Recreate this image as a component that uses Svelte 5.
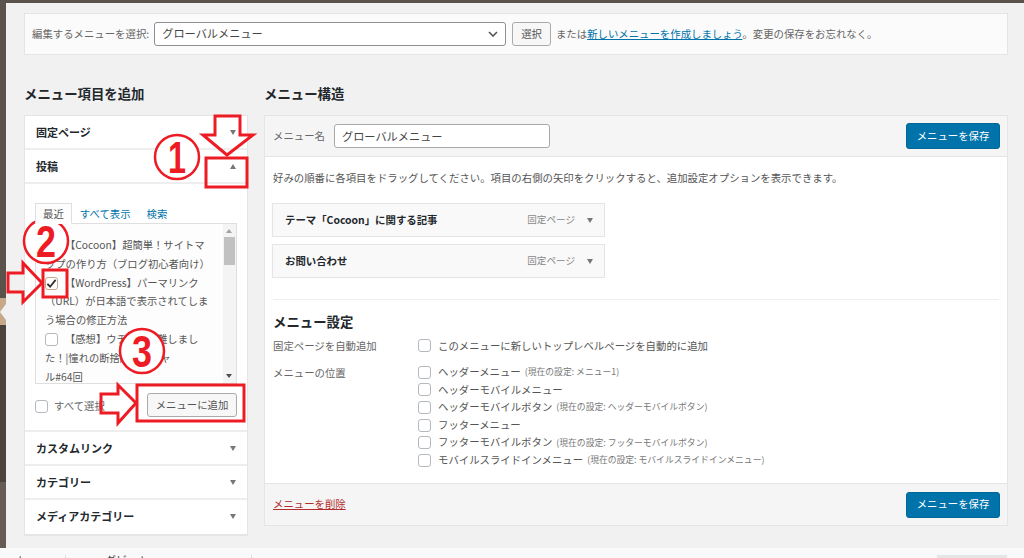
<script>
	const items = ['テーマ「Cocoon」に関する記事', 'お問い合わせ'];
	const posts = [
		{ lines: ['【Cocoon】超簡単！サイトマ', 'ップの作り方（ブログ初心者向け）'], checked: false },
		{ lines: ['【WordPress】パーマリンク', '（URL）が日本語で表示されてしま', 'う場合の修正方法'], checked: true },
		{ lines: ['【感想】ウチ、卒業難しまし', 'た！|憧れの断捨離スペシャ', 'ル#64回'], checked: false }
	];
	const locations = [
		['ヘッダーメニュー', '(現在の設定: メニュー1)'],
		['ヘッダーモバイルメニュー', ''],
		['ヘッダーモバイルボタン', '(現在の設定: ヘッダーモバイルボタン)'],
		['フッターメニュー', ''],
		['フッターモバイルボタン', '(現在の設定: フッターモバイルボタン)'],
		['モバイルスライドインメニュー', '(現在の設定: モバイルスライドインメニュー)']
	];
</script>

<div class="page">
	<div class="strip"></div>
	<div class="wrap">
		<div class="manage">
			<span class="muted">編集するメニューを選択:</span>
			<div class="select">グローバルメニュー
				<svg width="10" height="6" viewBox="0 0 10 6"><path d="M1 1l4 4 4-4" fill="none" stroke="#555" stroke-width="1.6"/></svg>
			</div>
			<button class="btn">選択</button>
			<span class="muted">または<a href="#new">新しいメニューを作成しましょう</a>。変更の保存をお忘れなく。</span>
		</div>

		<div class="columns">
			<div class="left">
				<h2>メニュー項目を追加</h2>
				<div class="acc">
					<div class="acc-row">固定ページ<i class="down"></i></div>
					<div class="acc-row">投稿<i class="up"></i></div>
					<div class="acc-body">
						<div class="tabs">
							<span class="tab active">最近</span>
							<span class="tab">すべて表示</span>
							<span class="tab">検索</span>
						</div>
						<div class="list">
							<div class="scrollbar"><i class="sb-up"></i><b></b><i class="sb-down"></i></div>
							{#each posts as post}
								<div class="post">
									<span class="cb" class:on={post.checked}>
										{#if post.checked}
											<svg width="11" height="11" viewBox="0 0 12 12"><path d="M1.5 6.5l3 3 6-7.5" fill="none" stroke="#333" stroke-width="2"/></svg>
										{/if}
									</span>
									{#each post.lines as line}
										<span class="post-line">{line}</span>
									{/each}
								</div>
							{/each}
						</div>
						<div class="list-foot">
							<span class="cb"></span>
							<span class="muted">すべて選択</span>
							<button class="btn add">メニューに追加</button>
						</div>
					</div>
					<div class="acc-row">カスタムリンク<i class="down"></i></div>
					<div class="acc-row">カテゴリー<i class="down"></i></div>
					<div class="acc-row">メディアカテゴリー<i class="down"></i></div>
				</div>
			</div>

			<div class="right">
				<h2>メニュー構造</h2>
				<div class="panel">
					<div class="panel-head">
						<span class="muted">メニュー名</span>
						<div class="name">グローバルメニュー</div>
						<button class="btn primary">メニューを保存</button>
					</div>
					<div class="panel-body">
						<p class="hint">好みの順番に各項目をドラッグしてください。項目の右側の矢印をクリックすると、追加設定オプションを表示できます。</p>
						{#each items as item}
							<div class="item">
								<strong>{item}</strong>
								<span class="item-type">固定ページ</span>
								<i class="down"></i>
							</div>
						{/each}
						<div class="settings">
							<h3>メニュー設定</h3>
							<div class="setting">
								<div class="setting-label">固定ページを自動追加</div>
								<div class="opt"><span class="cb"></span>このメニューに新しいトップレベルページを自動的に追加</div>
							</div>
							<div class="setting locs">
								<div class="setting-label">メニューの位置</div>
								<div>
									{#each locations as loc}
										<div class="opt"><span class="cb"></span>{loc[0]}{#if loc[1]}<small>{loc[1]}</small>{/if}</div>
									{/each}
								</div>
							</div>
						</div>
					</div>
					<div class="panel-foot">
						<a class="del" href="#del">メニューを削除</a>
						<button class="btn primary">メニューを保存</button>
					</div>
				</div>
			</div>
		</div>
	</div>
	<div class="footer">
		<span class="foot-a">ト</span>
		<span class="foot-b">グビート</span>
		<span class="foot-c"></span>
	</div>

	<!-- hand-drawn red annotations on top of the screenshot -->
	<svg class="notes" width="1024" height="558" viewBox="0 0 1024 558">
		<path d="M0 312L6 304V320Z" fill="#f1f1f1"/>
		<g fill="none" stroke="#ed1c24" stroke-width="3">
			<path d="M215 116H240V135H253L227 155L203 135H215Z"/>
			<path d="M8 273H23V263L42 283L23 302V292H8Z"/>
			<path d="M101 394H118V385L136 403L118 423V413H101Z"/>
			<rect x="206" y="158" width="41" height="29"/>
			<rect x="43" y="270" width="24" height="27"/>
			<rect x="137" y="385" width="107" height="36"/>
		</g>
		<g fill="#fff" stroke="#ed1c24" stroke-width="2.5">
			<circle cx="177" cy="157" r="22"/>
			<circle cx="46" cy="241" r="22"/>
			<circle cx="142" cy="351" r="22"/>
		</g>
		<g class="num" fill="#ed1c24" text-anchor="middle">
			<text x="177" y="173" textLength="18" lengthAdjust="spacingAndGlyphs">1</text>
			<text x="46" y="257" textLength="20" lengthAdjust="spacingAndGlyphs">2</text>
			<text x="142" y="367" textLength="20" lengthAdjust="spacingAndGlyphs">3</text>
		</g>
	</svg>
</div>

<style>
	:global(body) {
		margin: 0;
		background: #f1f1f1;
		font-family: "Noto Sans CJK JP", "Liberation Sans", sans-serif;
		color: #444;
	}

	.page {
		position: relative;
		width: 1024px;
		height: 558px;
		overflow: hidden;
		display: flex;
		flex-wrap: wrap;
		align-content: flex-start;
		background: #f1f1f1;
		border-top: 3px solid #5b524b;
		box-sizing: border-box;
		font-size: 10.4px;
		line-height: 1.4;
	}

	.strip {
		width: 6px;
		height: 545px;
		background: linear-gradient(#5b524b 0 295px, #c8a88b 295px 322px, #4b443e 322px 479px, #665c55 479px);
	}

	.wrap {
		width: 1002px;
		height: 545px;
		padding: 10px 0 0 18px;
		box-sizing: border-box;
	}

	.muted { color: #666; }

	.manage {
		display: flex;
		align-items: center;
		gap: 5px;
		height: 42px;
		padding: 0 7px;
		box-sizing: border-box;
		background: #fbfbfb;
		border: 1px solid #e5e5e5;
	}

	.select {
		display: flex;
		justify-content: space-between;
		align-items: center;
		width: 352px;
		height: 24px;
		margin-right: 1px;
		padding: 0 7px;
		box-sizing: border-box;
		background: #fff;
		border: 1px solid #8c8f94;
		border-radius: 3px;
		font-size: 11.2px;
		color: #444;
	}

	.btn {
		font: inherit;
		height: 24px;
		padding: 0 8px;
		color: #555;
		background: #f7f7f7;
		border: 1px solid #aaa;
		border-radius: 3px;
	}

	.manage a { color: #0073aa; }

	.columns {
		display: flex;
		gap: 16px;
		margin-top: 28px;
	}

	h2 {
		margin: 0 0 12px;
		font-size: 13.4px;
		line-height: 20px;
		font-weight: 700;
		color: #23282d;
	}

	.left { width: 224px; }
	.right { width: 744px; }

	.acc {
		background: #fff;
		border: 1px solid #e5e5e5;
		border-bottom-width: 2px;
	}

	.acc-row {
		position: relative;
		height: 34px;
		padding: 0 11px;
		box-sizing: border-box;
		font-size: 11px;
		line-height: 32px;
		font-weight: 700;
		color: #23282d;
		border-bottom: 2px solid #eee;
	}

	.acc-row:last-child { border-bottom: 0; }

	.acc-row i {
		position: absolute;
		right: 11px;
		top: 14px;
	}

	.down, .up {
		display: inline-block;
		width: 0;
		height: 0;
		border-left: 3.5px solid transparent;
		border-right: 3.5px solid transparent;
	}

	.down { border-top: 5px solid #777; }
	.up { border-bottom: 5px solid #777; }

	.acc-body {
		height: 248px;
		padding: 19px 10px 0;
		box-sizing: border-box;
		border-bottom: 2px solid #eee;
	}

	.tabs {
		display: flex;
		height: 20px;
		position: relative;
		z-index: 1;
	}

	.tab {
		height: 21px;
		padding: 0 7px;
		line-height: 20px;
		color: #0073aa;
		border: 1px solid transparent;
		box-sizing: border-box;
	}

	.tab.active {
		color: #555;
		background: #fdfdfd;
		border-color: #dfdfdf;
		border-bottom-color: #fdfdfd;
	}

	.list {
		position: relative;
		height: 161px;
		overflow: hidden;
		padding: 12px 14px 0 9px;
		box-sizing: border-box;
		background: #fdfdfd;
		border: 1px solid #dfdfdf;
		color: #555;
	}

	.scrollbar {
		position: absolute;
		top: 0;
		right: 0;
		bottom: 0;
		width: 13px;
		background: #f4f4f4;
	}

	.scrollbar b {
		position: absolute;
		top: 13px;
		left: 1px;
		width: 11px;
		height: 28px;
		background: #c1c1c1;
	}

	.sb-up, .sb-down {
		position: absolute;
		left: 3px;
		width: 0;
		height: 0;
		border-left: 3px solid transparent;
		border-right: 3px solid transparent;
	}

	.sb-up { top: 5px; border-bottom: 4px solid #a3a3a3; }
	.sb-down { bottom: 5px; border-top: 4px solid #505050; }

	.post {
		line-height: 18.8px;
		font-size: 10.3px;
	}

	.post-line {
		display: block;
		white-space: nowrap;
	}

	.post .cb {
		float: left;
		margin: 3px 7px 0 0;
	}

	.cb {
		display: inline-flex;
		align-items: center;
		justify-content: center;
		flex: none;
		width: 13px;
		height: 13px;
		background: #fff;
		border: 1px solid #b4b9be;
		border-radius: 3px;
		box-sizing: border-box;
	}

	.cb.on { border-color: #c8a88b; }

	.list-foot {
		display: flex;
		align-items: center;
		height: 44px;
		gap: 6px;
	}

	.list-foot .add {
		margin: -2px 0 0 auto;
		width: 90px;
		padding: 0;
	}

	.panel {
		background: #fff;
		border: 1px solid #e5e5e5;
	}

	.panel-head {
		display: flex;
		align-items: center;
		height: 41px;
		padding: 0 7px 0 8px;
		box-sizing: border-box;
		background: #f5f5f5;
		border-bottom: 1px solid #e5e5e5;
		gap: 9px;
	}

	.name {
		width: 216px;
		height: 24px;
		line-height: 22px;
		padding: 0 7px;
		box-sizing: border-box;
		background: #fff;
		border: 1px solid #aaa;
		border-radius: 3px;
		font-size: 11.2px;
	}

	.primary {
		margin-left: auto;
		width: 94px;
		height: 26px;
		padding: 0;
		color: #fff;
		background: #0073aa;
		border-color: #006799;
	}

	.panel-body {
		height: 326px;
		padding: 13px 8px 0;
		box-sizing: border-box;
	}

	.hint {
		margin: 0 0 17px;
		color: #555;
		line-height: 16px;
	}

	.item {
		display: flex;
		align-items: center;
		width: 333px;
		height: 34px;
		margin: 0 0 7px -1px;
		padding: 0 11px 0 12px;
		box-sizing: border-box;
		background: #f9f9f9;
		border: 1px solid #e5e5e5;
		color: #23282d;
	}

	.item-type {
		margin-left: auto;
		margin-right: 12px;
		font-size: 9.6px;
		color: #888;
	}

	.settings {
		margin-top: 21px;
		padding-top: 11px;
		border-top: 1px solid #eee;
	}

	h3 {
		margin: 0 0 6px;
		font-size: 13.4px;
		line-height: 20px;
		color: #23282d;
	}

	.setting { display: flex; }
	.setting-label { width: 145px; line-height: 17.6px; color: #666; }
	.locs { margin-top: 9px; }

	.opt {
		display: flex;
		align-items: center;
		gap: 7px;
		height: 17.6px;
		color: #555;
	}

	.opt small {
		font-size: 8.8px;
		color: #777;
		margin-left: -3px;
	}

	.panel-foot {
		display: flex;
		align-items: center;
		height: 42px;
		padding: 0 7px 0 8px;
		box-sizing: border-box;
		background: #f5f5f5;
		border-top: 1px solid #e5e5e5;
	}

	.del { color: #b32d2e; }

	.footer {
		display: flex;
		width: 1024px;
		height: 10px;
		overflow: hidden;
		background: #f9f9f9;
		font-size: 11px;
		line-height: 11px;
		color: #444;
	}

	.foot-a, .foot-b {
		margin-top: 7px;
		border-right: 1px solid #ddd;
		box-sizing: border-box;
	}

	.foot-a { width: 66px; padding-left: 16px; }
	.foot-b { width: 186px; padding-left: 39px; }

	.foot-c {
		width: 70px;
		margin: 7px 17px 0 auto;
		background: #e5e5e5;
	}

	.notes {
		position: absolute;
		left: 0;
		top: -3px;
	}

	.num text {
		font-family: "Liberation Sans", sans-serif;
		font-weight: 700;
		font-size: 44px;
	}
</style>
